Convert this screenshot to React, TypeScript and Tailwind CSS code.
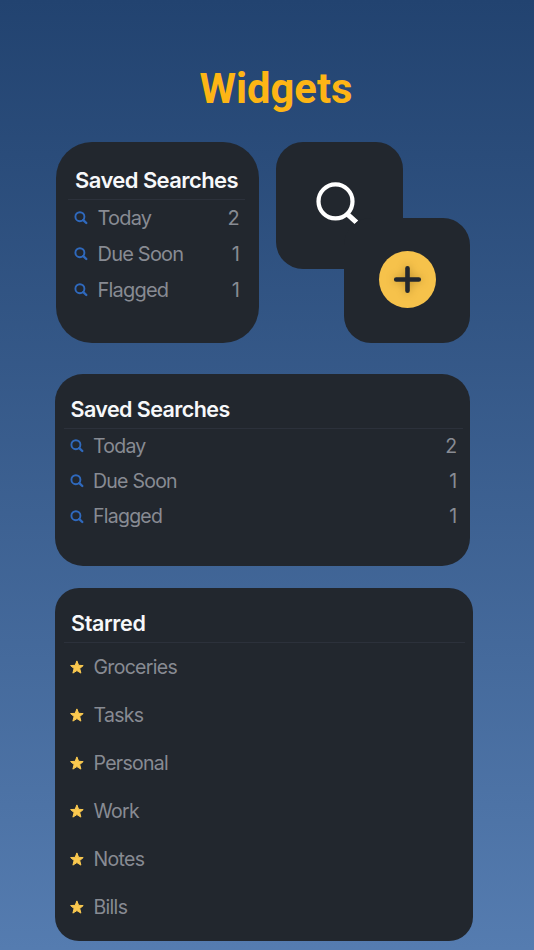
import { clsx } from 'clsx';

interface SearchItem {
  label: string;
  count: number;
}

const savedSearches: SearchItem[] = [
  { label: 'Today', count: 2 },
  { label: 'Due Soon', count: 1 },
  { label: 'Flagged', count: 1 },
];

const starred = ['Groceries', 'Tasks', 'Personal', 'Work', 'Notes', 'Bills'];

const SearchIcon = () => (
  <svg className="h-3.5 w-3.5 shrink-0 text-[#2f69bd]" viewBox="0 0 14 14" fill="none">
    <circle cx="5.9" cy="5.7" r="4.5" stroke="currentColor" strokeWidth="1.9" />
    <path d="M9.3 9.1 12.3 12" stroke="currentColor" strokeWidth="2.4" strokeLinecap="round" />
  </svg>
);

const StarIcon = () => (
  <svg className="h-3.5 w-3.5 shrink-0 overflow-visible text-[#fbc94f]" viewBox="0 0 14 14">
    <path
      d="M6.9 -.1 8.6 4.3 13.2 4.6 9.7 7.5 10.9 12.1 6.9 9.6 2.9 12.1 4.1 7.5 .6 4.6 5.2 4.3Z"
      fill="currentColor"
      stroke="currentColor"
      strokeWidth="1"
      strokeLinejoin="round"
    />
  </svg>
);

interface SavedSearchesProps {
  wide?: boolean;
}

const SavedSearches = ({ wide = false }: Readonly<SavedSearchesProps>) => (
  <section
    className={clsx(
      'bg-[#22272e]',
      wide
        ? 'h-48 w-[415px] rounded-[28px] pt-[19px] pr-[7px] pl-[9px]'
        : 'h-[201px] w-[203.5px] rounded-[36px] pt-[22px] pr-3.5 pl-[12.5px]',
    )}
  >
    <h2
      className={clsx(
        'h-9 border-b border-[#2c313b] pl-[7px] leading-8 font-semibold text-[#f7f8fa]',
        wide ? 'text-[21.5px] tracking-[-0.58px]' : 'text-[22px] tracking-[-0.58px]',
      )}
    >
      Saved Searches
    </h2>
    <ul
      className={clsx(
        'pl-1.5 text-[#888b93]',
        wide ? 'pr-1.5 text-[19.5px] tracking-[-0.75px]' : 'pr-1.5 text-[20px] tracking-[-0.8px]',
      )}
    >
      {savedSearches.map((item) => (
        <li
          key={item.label}
          className={clsx('flex items-center', wide ? 'h-[35.3px] gap-[9.5px]' : 'h-9 gap-[9.5px]')}
        >
          <SearchIcon />
          <span className="flex-1 whitespace-nowrap">{item.label}</span>
          <span>{item.count}</span>
        </li>
      ))}
    </ul>
  </section>
);

const QuickActions = () => (
  <div className="grid h-[201px] w-[194px]">
    <button
      aria-label="Search"
      className="flex h-[127px] w-[127px] items-center justify-center rounded-[27px] bg-[#22272e] [grid-area:1/1]"
    >
      <svg className="mr-1 mb-1 h-[46px] w-[46px]" viewBox="0 0 46 46" fill="none" stroke="#fff">
        <circle cx="20.5" cy="20.4" r="17" strokeWidth="4.2" />
        <path d="M31.5 32.3 41.5 41.4" strokeWidth="5" />
      </svg>
    </button>
    <button
      aria-label="Add"
      className="flex h-[125px] w-[126.5px] items-center justify-center self-end justify-self-end rounded-[27px] bg-[#22272e] pb-0.5 pl-px [grid-area:1/1]"
    >
      <span className="flex h-[57px] w-[57px] items-center justify-center rounded-full bg-[#f6c24b]">
        <svg
          className="h-[57px] w-[57px] drop-shadow-[0_0_4px_rgba(90,60,0,0.4)]"
          viewBox="0 0 57 57"
          fill="none"
          stroke="#22272e"
        >
          <path d="M28.5 17.2v22.6M17.2 28.5h22.6" strokeWidth="4.6" strokeLinecap="round" />
        </svg>
      </span>
    </button>
  </div>
);

const Starred = () => (
  <section className="h-[353px] w-[418.5px] rounded-3xl bg-[#22272e] pt-[19px] pr-2 pl-[9px]">
    <h2 className="h-9 border-b border-[#2c313b] pl-[7.5px] text-[21.5px] leading-8 font-semibold tracking-[-0.35px] text-[#f7f8fa]">
      Starred
    </h2>
    <ul className="pt-px pl-1.5 text-[19.5px] tracking-[-0.7px] text-[#888b93]">
      {starred.map((label) => (
        <li key={label} className="flex h-12 items-center gap-2.5">
          <StarIcon />
          <span>{label}</span>
        </li>
      ))}
    </ul>
  </section>
);

export default function App() {
  return (
    <main className="flex h-[950px] w-[534px] flex-col overflow-hidden bg-linear-to-b from-[#224370] to-[#557cb0] pl-[54.5px] font-['Inter',sans-serif]">
      <h1 className="mt-16 h-[78px] w-[443px] text-center font-['Roboto',sans-serif] text-[41.7px] leading-[50px] font-bold text-[#fdb515]">
        Widgets
      </h1>
      <div className="flex gap-[17px] pl-px">
        <SavedSearches />
        <QuickActions />
      </div>
      <div className="mt-[30.5px]">
        <SavedSearches wide />
      </div>
      <div className="mt-[22px]">
        <Starred />
      </div>
    </main>
  );
}
